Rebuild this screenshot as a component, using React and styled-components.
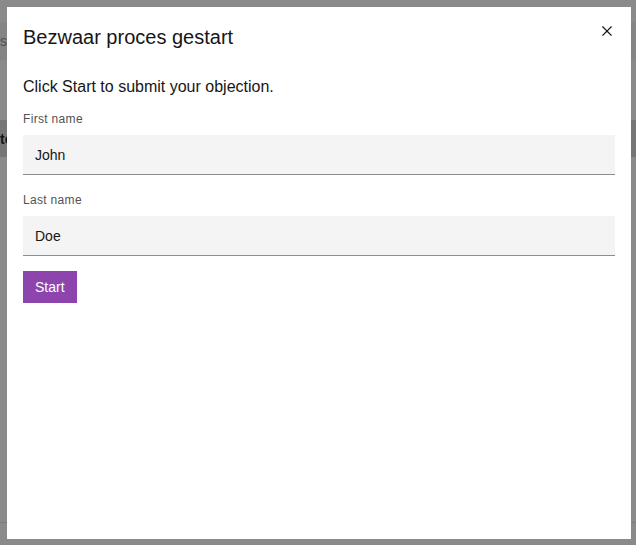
import React from "react";
import styled, { createGlobalStyle } from "styled-components";

const GlobalStyle = createGlobalStyle`
  html, body {
    margin: 0;
    padding: 0;
    background: #ffffff;
    font-family: "Liberation Sans", Arial, sans-serif;
    color: #161616;
  }
  * { box-sizing: border-box; }
`;

const Page = styled.div`
  width: 636px;
  height: 545px;
  overflow: hidden;
  display: flex;
  flex-direction: column;
`;

const TopGap = styled.div`
  height: 22px;
`;

const SearchBar = styled.div`
  height: 38px;
  background: #f4f4f4;
  display: flex;
  align-items: center;
  font-size: 14px;
  color: #8d8d8d;
`;

const Spacer = styled.div`
  height: ${(p) => p.h}px;
`;

const TableHead = styled.div`
  height: 37px;
  background: #d6d6d6;
  display: flex;
  align-items: center;
  font-size: 14px;
  font-weight: 700;
  color: #161616;
`;

const BottomLine = styled.div`
  margin-top: auto;
  margin-bottom: 22px;
  height: 1px;
  background: #e0e0e0;
`;

const Overlay = styled.div`
  position: fixed;
  inset: 0;
  background: rgba(22, 22, 22, 0.5);
`;

const Modal = styled.div`
  position: fixed;
  top: 7px;
  left: 7px;
  width: 624px;
  height: 532px;
  background: #ffffff;
  display: flex;
  flex-direction: column;
  padding: 16px 16px 0 16px;
`;

const Heading = styled.h2`
  margin: 0;
  font-size: 20px;
  line-height: 28px;
  font-weight: 400;
  color: #161616;
  padding-right: 48px;
`;

const CloseButton = styled.button`
  position: absolute;
  top: 0;
  right: 0;
  width: 48px;
  height: 48px;
  border: 0;
  background: transparent;
  display: flex;
  align-items: center;
  justify-content: center;
  padding: 0;
  cursor: pointer;
`;

const Intro = styled.p`
  margin: 24px 0 12px;
  font-size: 16px;
  line-height: 24px;
  color: #161616;
`;

const Field = styled.div`
  display: flex;
  flex-direction: column;
  margin-bottom: ${(p) => p.gap}px;
`;

const Label = styled.label`
  font-size: 12px;
  line-height: 16px;
  letter-spacing: 0.32px;
  color: #525252;
  margin-bottom: 8px;
`;

const Input = styled.input`
  height: 40px;
  border: 0;
  border-bottom: 1px solid #8d8d8d;
  background: #f4f4f4;
  padding: 0 12px;
  font-family: inherit;
  font-size: 14px;
  color: #161616;
  outline: none;
`;

const Row = styled.div`
  display: flex;
`;

const PrimaryButton = styled.button`
  height: 32px;
  padding: 0 12px;
  border: 0;
  background: #8e44ad;
  color: #ffffff;
  font-family: inherit;
  font-size: 14px;
  cursor: pointer;
`;

const CloseIcon = () => (
  <svg width="20" height="20" viewBox="0 0 32 32" fill="#161616">
    <path d="M24 9.4L22.6 8 16 14.6 9.4 8 8 9.4 14.6 16 8 22.6 9.4 24 16 17.4 22.6 24 24 22.6 17.4 16 24 9.4z" />
  </svg>
);

export default function App() {
  return (
    <>
      <GlobalStyle />
      <Page>
        <TopGap />
        <SearchBar>se</SearchBar>
        <Spacer h={60} />
        <TableHead>to</TableHead>
        <BottomLine />
      </Page>
      <Overlay />
      <Modal>
        <Heading>Bezwaar proces gestart</Heading>
        <CloseButton aria-label="Close">
          <CloseIcon />
        </CloseButton>
        <Intro>Click Start to submit your objection.</Intro>
        <Field gap={17}>
          <Label>First name</Label>
          <Input defaultValue="John" />
        </Field>
        <Field gap={15}>
          <Label>Last name</Label>
          <Input defaultValue="Doe" />
        </Field>
        <Row>
          <PrimaryButton>Start</PrimaryButton>
        </Row>
      </Modal>
    </>
  );
}
